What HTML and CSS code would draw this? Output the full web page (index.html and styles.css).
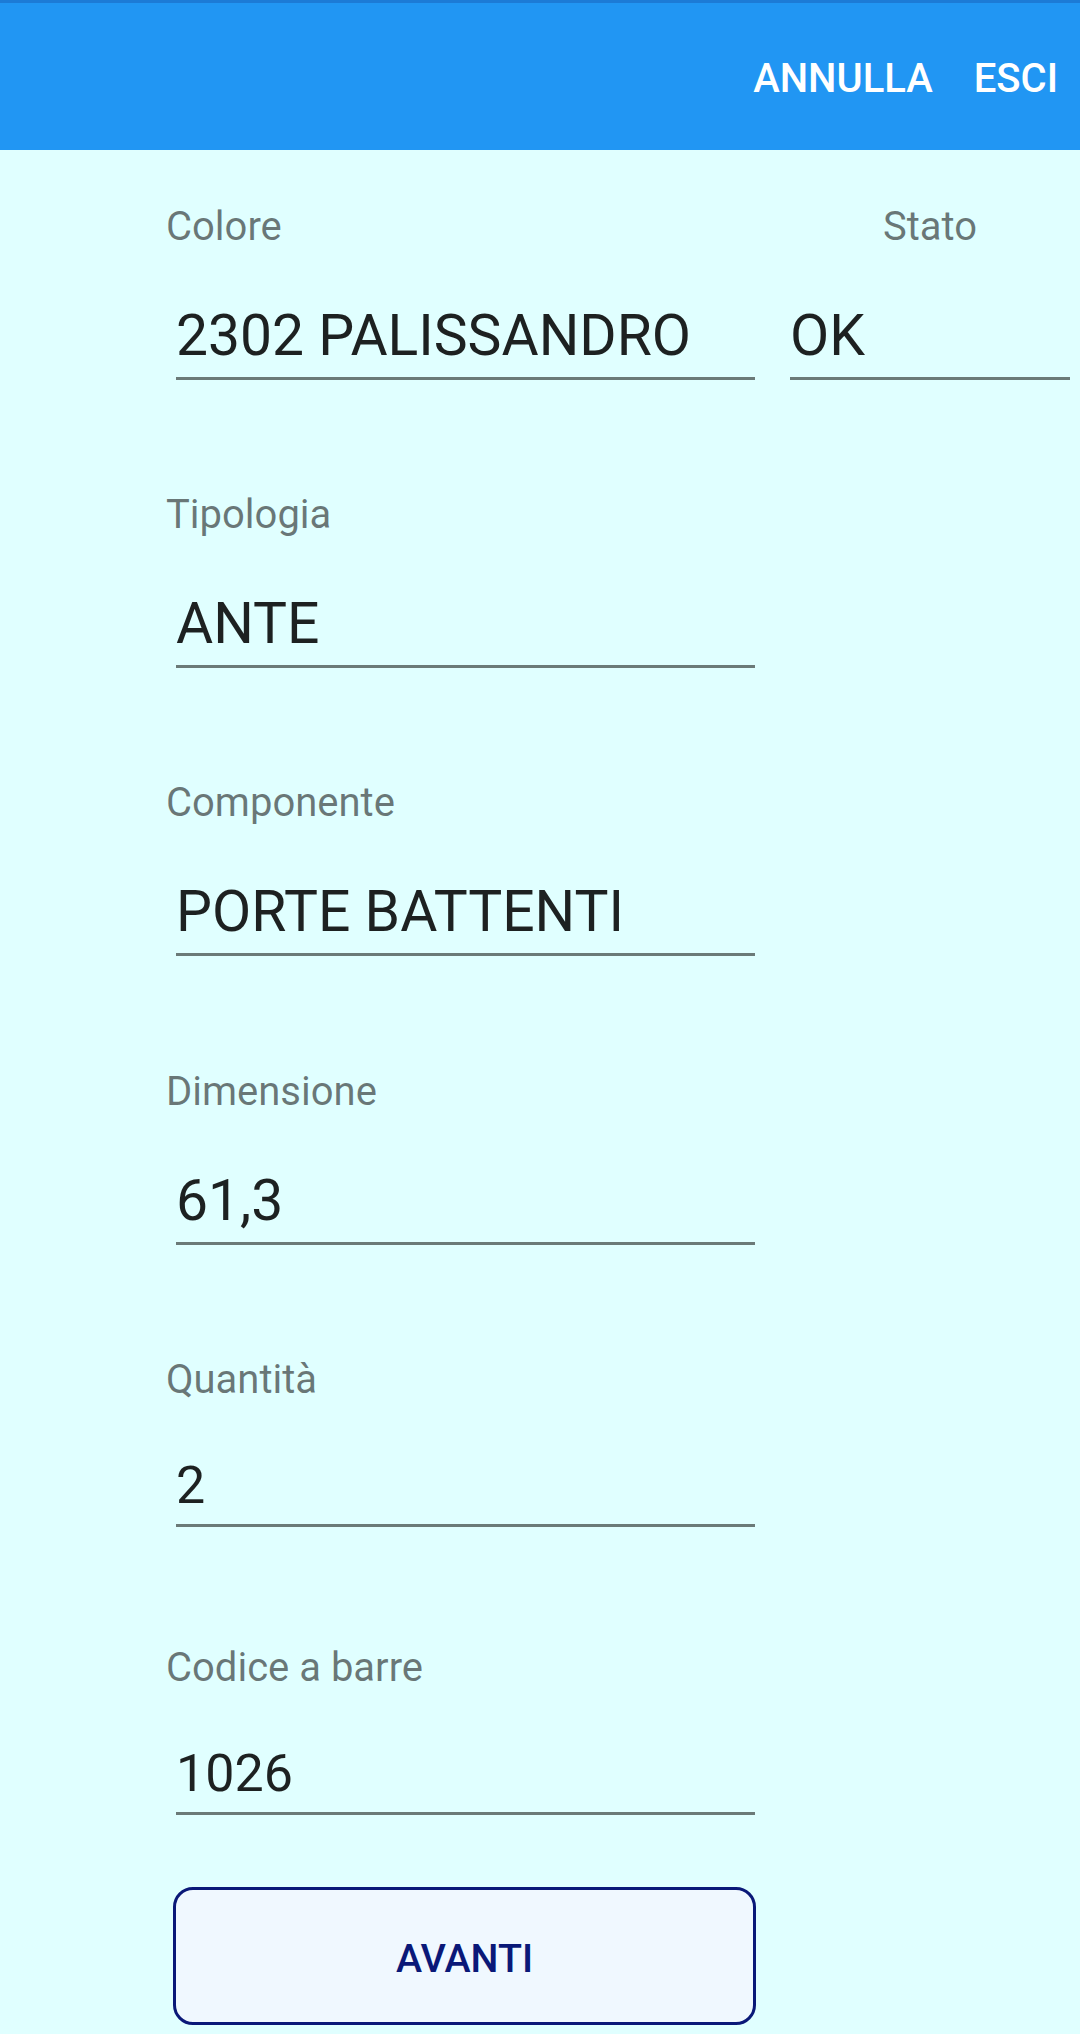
FILE: index.html
```html
<!DOCTYPE html>
<html lang="it">
<head>
    <meta charset="UTF-8">
    <meta name="viewport" content="width=device-width, initial-scale=1.0">
    <title>Controllo pezzo</title>
    <link rel="stylesheet" href="styles.css">
</head>
<body>
<div class="topbar">
    <div class="actions">
        <span class="action">ANNULLA</span>
        <span class="action">ESCI</span>
    </div>
</div>

<div class="form">
    <div class="field split">
        <div class="col">
            <div class="label">Colore</div>
            <div class="value">2302 PALISSANDRO</div>
        </div>
        <div class="col col-state">
            <div class="label">Stato</div>
            <div class="value">OK</div>
        </div>
    </div>

    <div class="field">
        <div class="label">Tipologia</div>
        <div class="value">ANTE</div>
    </div>

    <div class="field">
        <div class="label">Componente</div>
        <div class="value">PORTE BATTENTI</div>
    </div>

    <div class="field">
        <div class="label">Dimensione</div>
        <div class="value">61,3</div>
    </div>

    <div class="field">
        <div class="label">Quantità</div>
        <div class="value small">2</div>
    </div>

    <div class="field last">
        <div class="label">Codice a barre</div>
        <div class="value small">1026</div>
    </div>

    <button class="next-btn" id="nextBtn">AVANTI</button>
</div>
</body>
</html>
```

FILE: styles.css
```css
body {
    margin: 0;
    font-family: Roboto, "Noto Sans", Arial, sans-serif;
    background-color: #e0ffff;
    min-height: 2034px;
}
.topbar {
    background-color: #2196f3;
    border-top: 3px solid #1c7bd6;
    height: 147px;
}
.actions {
    display: flex;
    justify-content: flex-end;
    gap: 41px;
    padding: 52px 22px 0 0;
}
.action {
    color: #fff;
    font-size: 40px;
    font-weight: 500;
    line-height: 47px;
}
.form {
    padding: 53.5px 0 0 166px;
}
.field {
    height: 288.4px;
}
.field.last {
    height: auto;
}
.split {
    display: flex;
    gap: 35px;
}
.label {
    color: rgba(0, 0, 0, 0.54);
    font-size: 40px;
    line-height: 46px;
}
.value {
    margin: 52px 0 0 10px;
    width: 579px;
    color: rgba(0, 0, 0, 0.87);
    font-size: 57px;
    line-height: 68px;
    padding-bottom: 7px;
    border-bottom: 3px solid #6b7a78;
    white-space: nowrap;
}
.value.small {
    font-size: 52px;
    line-height: 62px;
}
.col-state {
    width: 280px;
}
.col-state .label {
    text-align: center;
}
.col-state .value {
    margin-left: 0;
    width: 280px;
}
.next-btn {
    display: block;
    margin: 71.5px 0 0 7px;
    width: 583px;
    height: 138px;
    padding: 46.5px 0 39.5px;
    box-sizing: border-box;
    background-color: #f0f8ff;
    border: 3px solid #0a1878;
    border-radius: 20px;
    color: #0a1878;
    font-family: Roboto, "Noto Sans", Arial, sans-serif;
    font-size: 39.4px;
    font-weight: 500;
    line-height: 46px;
    text-align: center;
}
```
